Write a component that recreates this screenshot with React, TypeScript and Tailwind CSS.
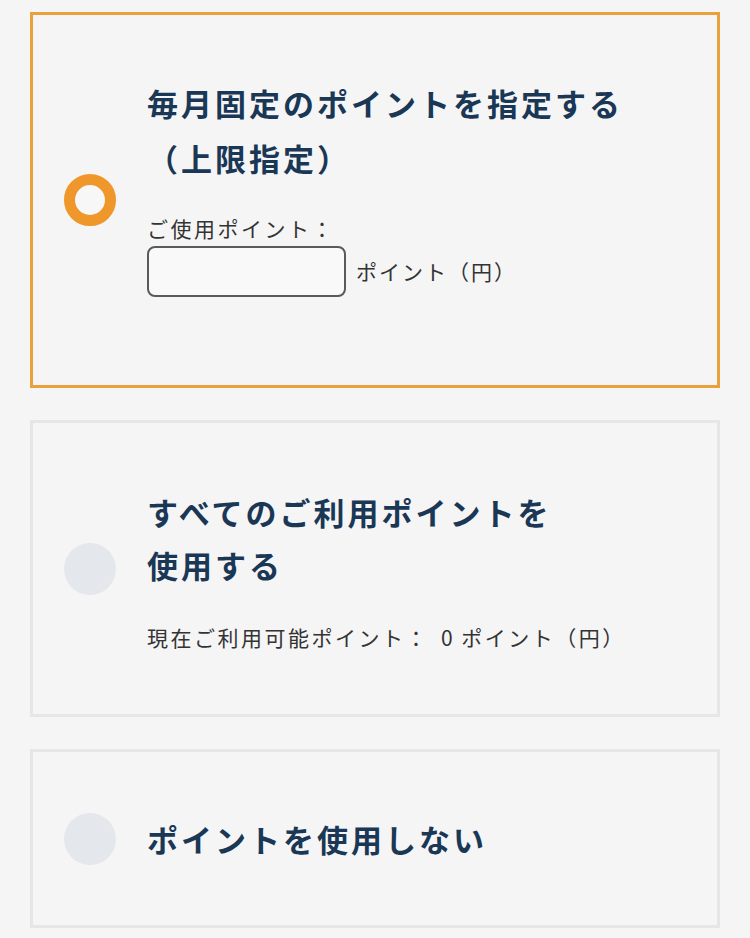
import { useState } from 'react'

type Choice = 'fixed' | 'all' | 'none'

const FONT = { fontFamily: '"Noto Sans CJK JP", "Noto Sans", sans-serif' }

function Radio({ checked }: { checked: boolean }) {
  return checked ? (
    <span className="block w-[52px] h-[52px] shrink-0 rounded-full border-[11px] border-[#ef972a] bg-[#f7f7f7]" />
  ) : (
    <span className="block w-[52px] h-[52px] shrink-0 rounded-full bg-[#e4e7eb]" />
  )
}

export default function App() {
  const [choice, setChoice] = useState<Choice>('fixed')
  const [points, setPoints] = useState('')

  const cardClass = (c: Choice) =>
    `flex items-center gap-[31px] pl-[31px] pr-4 border-[3px] cursor-pointer ${
      choice === c ? 'border-[#e9a23b]' : 'border-[#e6e6e6]'
    }`

  return (
    <div className="min-h-screen bg-[#f5f5f5] px-[30px] pt-[12px] pb-[11px] flex flex-col gap-[32px] text-[#333]" style={FONT}>
      <div className={`${cardClass('fixed')} h-[376px]`} onClick={() => setChoice('fixed')}>
        <Radio checked={choice === 'fixed'} />
        <div className="self-start flex flex-col pt-[60px]">
          <h2 className="text-[31px] leading-[55px] font-bold text-[#1a3755] tracking-[3px]">
            毎月固定のポイントを指定する
            <br />
            （上限指定）
          </h2>
          <p className="mt-[28px] text-[21px] leading-[30px] tracking-[2.5px]">ご使用ポイント：</p>
          <div className="flex items-center gap-[10px] mt-[3px]">
            <input
              value={points}
              onChange={(e) => setPoints(e.target.value)}
              className="w-[199px] h-[51px] rounded-[8px] border-2 border-[#5a5a5a] bg-[#f9f9f9] px-3 text-[20px] outline-none"
            />
            <span className="text-[21px] tracking-[2px]">ポイント（円）</span>
          </div>
        </div>
      </div>

      <div className={`${cardClass('all')} h-[297px]`} onClick={() => setChoice('all')}>
        <Radio checked={choice === 'all'} />
        <div className="flex flex-col">
          <h2 className="text-[31px] leading-[53px] font-bold text-[#1a3755] tracking-[3px]">
            すべてのご利用ポイントを
            <br />
            使用する
          </h2>
          <p className="mt-[31px] text-[21px] leading-[30px] tracking-[2.5px]">
            現在ご利用可能ポイント：<span className="ml-[12px] mr-[6px]">0</span>ポイント（円）
          </p>
        </div>
      </div>

      <div className={`${cardClass('none')} h-[179px]`} onClick={() => setChoice('none')}>
        <Radio checked={choice === 'none'} />
        <h2 className="text-[31px] leading-[54px] font-bold text-[#1a3755] tracking-[3px]">ポイントを使用しない</h2>
      </div>
    </div>
  )
}
